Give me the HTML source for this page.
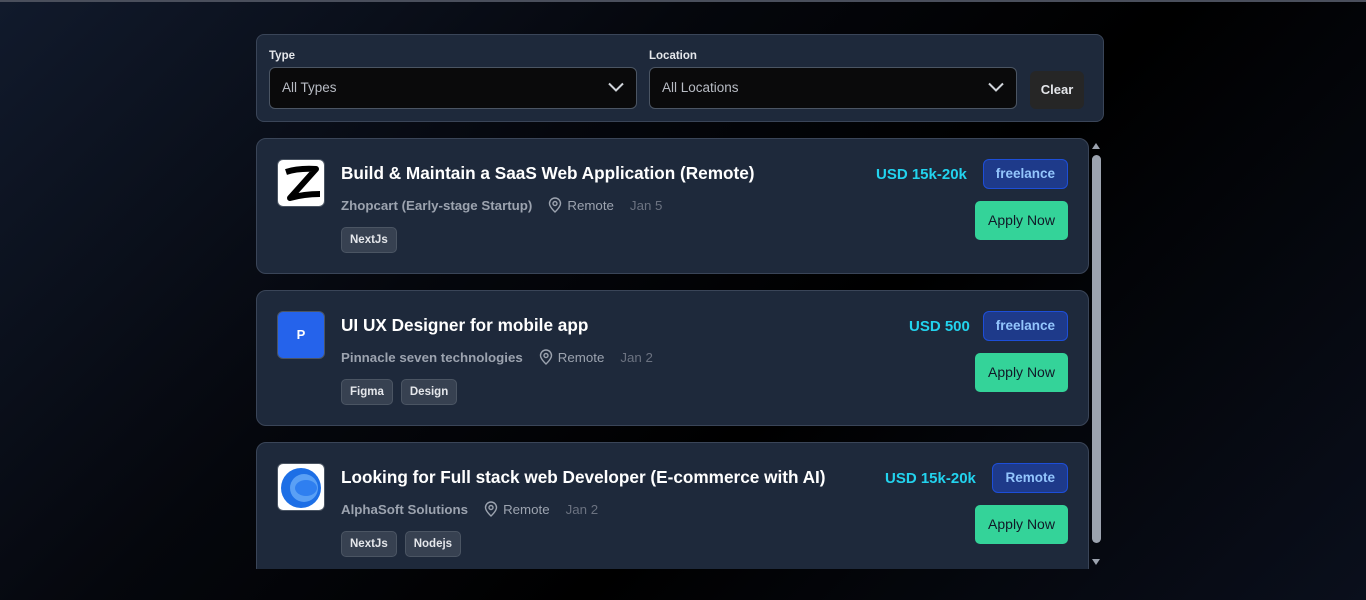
<!DOCTYPE html>
<html><head><meta charset="utf-8">
<style>
*{box-sizing:border-box;margin:0;padding:0}
body{width:1366px;height:600px;overflow:hidden;font-family:"Liberation Sans",sans-serif;
background:linear-gradient(135deg,#111a2c 0%,#05070d 35%,#000 60%,#0a0f1c 100%);position:relative;color:#fff}
.topline{position:absolute;left:0;top:0;width:1366px;height:2px;background:#4a4f5c}
.filter{position:absolute;left:256px;top:34px;width:848px;height:88px;background:#1e293b;border:1px solid #3a4558;border-radius:8px}
.lbl{position:absolute;top:15px;font-size:11.5px;font-weight:bold;color:#e5e7eb}
.sel{position:absolute;top:32px;height:42px;background:#0a0a0b;border:1px solid #4b5563;border-radius:6px;color:#b8bcc4;font-size:13.5px;padding:12px 12px}
.sel svg{position:absolute;right:12px;top:14px}
.clear{position:absolute;left:773px;top:36px;width:54px;height:38px;background:#262626;border-radius:6px;font-size:13px;font-weight:bold;color:#e5e7eb;text-align:center;line-height:38px}
.list{position:absolute;left:256px;top:138px;width:848px;height:431px;overflow:hidden}
.card{position:absolute;left:0;width:833px;height:136px;background:#1e293b;border:1px solid #3a4558;border-radius:10px}
.logo{position:absolute;left:20px;top:20px;width:48px;height:48px;border-radius:6px;border:1px solid #4b5563;background:#fff;overflow:hidden}
.title{position:absolute;left:84px;top:24px;font-size:17.2px;font-weight:bold;color:#fff}
.meta{position:absolute;left:84px;top:58px;font-size:13.3px;color:#9ca3af;white-space:nowrap;display:flex;align-items:center}
.meta b{color:#9ca3af;font-weight:bold}
.meta .loc{margin-left:16px;display:flex;align-items:center;gap:5px;color:#9ca3af}
.meta .d{margin-left:16px;color:#6b7280}
.tags{position:absolute;left:84px;top:88px;display:flex;gap:8px}
.tag{height:26px;padding:0 8px;background:#374151;border:1px solid #4b5563;border-radius:5px;font-size:11.5px;font-weight:bold;color:#e5e7eb;line-height:24px}
.price{position:absolute;top:27px;font-size:15px;font-weight:bold;color:#22d3ee}
.badge{position:absolute;right:20px;top:20px;height:30px;padding:0 12px;background:#1e3a8a;border:1px solid #1d4ed8;border-radius:6px;color:#93c5fd;font-size:13.5px;font-weight:bold;line-height:28px}
.apply{position:absolute;right:20px;top:62px;width:93px;height:39px;background:#34d399;border-radius:5px;color:#111827;font-size:14px;text-align:center;line-height:39px}
.sb{position:absolute;left:1092px;top:155px;width:9px;height:388px;background:#9ca3af;border-radius:5px}
.ar{position:absolute;left:1092px;width:0;height:0;border-left:4.5px solid transparent;border-right:4.5px solid transparent}
</style></head><body>
<div class="topline"></div>
<div class="filter">
 <div class="lbl" style="left:12px">Type</div>
 <div class="sel" style="left:12px;width:368px">All Types<svg width="16" height="10" viewBox="0 0 16 10"><path d="M1 1.5l7 7 7-7" fill="none" stroke="#d1d5db" stroke-width="2"/></svg></div>
 <div class="lbl" style="left:392px">Location</div>
 <div class="sel" style="left:392px;width:368px">All Locations<svg width="16" height="10" viewBox="0 0 16 10"><path d="M1 1.5l7 7 7-7" fill="none" stroke="#d1d5db" stroke-width="2"/></svg></div>
 <div class="clear">Clear</div>
</div>
<div class="list">
 <div class="card" style="top:0">
  <div class="logo"><svg width="48" height="48" viewBox="0 0 48 48"><path d="M8 12 Q20 8 38 9 L12 38 Q26 34 42 34" fill="none" stroke="#000" stroke-width="6" stroke-linejoin="round"/></svg></div>
  <div class="title">Build &amp; Maintain a SaaS Web Application (Remote)</div>
  <div class="meta"><b>Zhopcart (Early-stage Startup)</b><span class="loc"><svg width="14" height="16" viewBox="0 0 14 16"><path d="M7 15s-5.5-5-5.5-8.5a5.5 5.5 0 0111 0C12.5 10 7 15 7 15z" fill="none" stroke="#9ca3af" stroke-width="1.4"/><circle cx="7" cy="6.5" r="2" fill="none" stroke="#9ca3af" stroke-width="1.4"/></svg>Remote</span><span class="d">Jan 5</span></div>
  <div class="tags"><div class="tag">NextJs</div></div>
  <div class="price" style="left:619px">USD 15k-20k</div>
  <div class="badge">freelance</div>
  <div class="apply">Apply Now</div>
 </div>
 <div class="card" style="top:152px">
  <div class="logo" style="background:#2563eb;color:#fff;font-weight:bold;font-size:13px;text-align:center;line-height:46px">P</div>
  <div class="title">UI UX Designer for mobile app</div>
  <div class="meta"><b>Pinnacle seven technologies</b><span class="loc"><svg width="14" height="16" viewBox="0 0 14 16"><path d="M7 15s-5.5-5-5.5-8.5a5.5 5.5 0 0111 0C12.5 10 7 15 7 15z" fill="none" stroke="#9ca3af" stroke-width="1.4"/><circle cx="7" cy="6.5" r="2" fill="none" stroke="#9ca3af" stroke-width="1.4"/></svg>Remote</span><span class="d">Jan 2</span></div>
  <div class="tags"><div class="tag">Figma</div><div class="tag">Design</div></div>
  <div class="price" style="left:652px">USD 500</div>
  <div class="badge">freelance</div>
  <div class="apply">Apply Now</div>
 </div>
 <div class="card" style="top:304px">
  <div class="logo"><svg width="48" height="48" viewBox="0 0 48 48"><circle cx="23" cy="24" r="20" fill="#1d6fe6"/><circle cx="26" cy="24" r="14" fill="#5aa0f5"/><ellipse cx="28" cy="24" rx="11" ry="8" fill="#2f7ff0"/></svg></div>
  <div class="title">Looking for Full stack web Developer (E-commerce with AI)</div>
  <div class="meta"><b>AlphaSoft Solutions</b><span class="loc"><svg width="14" height="16" viewBox="0 0 14 16"><path d="M7 15s-5.5-5-5.5-8.5a5.5 5.5 0 0111 0C12.5 10 7 15 7 15z" fill="none" stroke="#9ca3af" stroke-width="1.4"/><circle cx="7" cy="6.5" r="2" fill="none" stroke="#9ca3af" stroke-width="1.4"/></svg>Remote</span><span class="d">Jan 2</span></div>
  <div class="tags"><div class="tag">NextJs</div><div class="tag">Nodejs</div></div>
  <div class="price" style="left:628px">USD 15k-20k</div>
  <div class="badge">Remote</div>
  <div class="apply">Apply Now</div>
 </div>
</div>
<div class="ar" style="top:143px;border-bottom:6px solid #9ca3af"></div>
<div class="sb"></div>
<div class="ar" style="top:559px;border-top:6px solid #9ca3af"></div>
</body></html>
